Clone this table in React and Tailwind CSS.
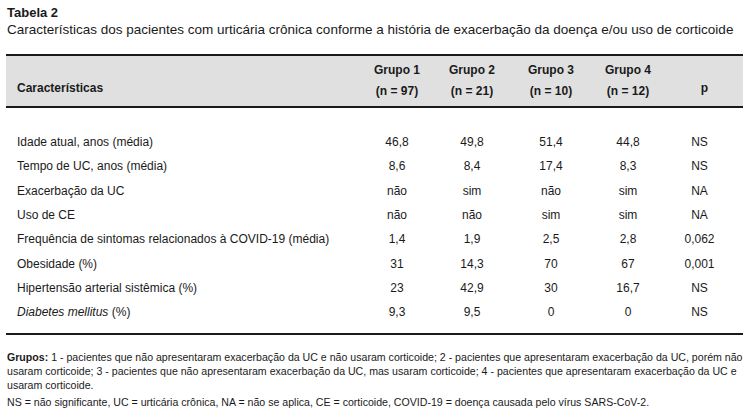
import React from 'react';

const rows = [
  { label: 'Idade atual, anos (média)', values: ['46,8', '49,8', '51,4', '44,8', 'NS'] },
  { label: 'Tempo de UC, anos (média)', values: ['8,6', '8,4', '17,4', '8,3', 'NS'] },
  { label: 'Exacerbação da UC', values: ['não', 'sim', 'não', 'sim', 'NA'] },
  { label: 'Uso de CE', values: ['não', 'não', 'sim', 'sim', 'NA'] },
  { label: 'Frequência de sintomas relacionados à COVID-19 (média)', values: ['1,4', '1,9', '2,5', '2,8', '0,062'] },
  { label: 'Obesidade (%)', values: ['31', '14,3', '70', '67', '0,001'] },
  { label: 'Hipertensão arterial sistêmica (%)', values: ['23', '42,9', '30', '16,7', 'NS'] },
  { label: <><i>Diabetes mellitus</i> (%)</>, values: ['9,3', '9,5', '0', '0', 'NS'] },
];

const groups = [
  { name: 'Grupo 1', n: '(n = 97)' },
  { name: 'Grupo 2', n: '(n = 21)' },
  { name: 'Grupo 3', n: '(n = 10)' },
  { name: 'Grupo 4', n: '(n = 12)' },
];

// widths of the group columns and the p column
const colW = ['w-[70px]', 'w-[80px]', 'w-[78px]', 'w-[76px]', 'w-[77px]'];

export default function App() {
  return (
    <div className="w-[749px] h-[414px] bg-white text-[#1a1a1a] font-['Liberation_Sans',Arial,sans-serif] overflow-hidden">
      {/* Caption */}
      <div className="pl-[7px] pt-[5px]">
        <p className="text-[13px] font-bold leading-[15px]">Tabela 2</p>
        <p className="text-[13.5px] leading-[16px] mt-[2px]">
          Características dos pacientes com urticária crônica conforme a história de exacerbação da doença e/ou uso de corticoide
        </p>
      </div>

      {/* Table */}
      <div className="ml-[6px] w-[737px] mt-[16px]">
        <div className="border-t-2 border-b-2 border-[#1a1a1a] bg-[#e0e0e0] h-[54px] flex text-[12px] font-bold">
          <div className="flex-1 flex items-end pl-[11px] pb-[9px]">Características</div>
          {groups.map((g, i) => (
            <div key={g.name} className={`${colW[i]} flex flex-col items-center justify-center leading-[21px]`}>
              <span>{g.name}</span>
              <span>{g.n}</span>
            </div>
          ))}
          <div className={`${colW[4]} flex items-end justify-center pb-[9px]`}>p</div>
        </div>

        <div className="pt-[22px] pb-[9px] border-b-2 border-[#1a1a1a] text-[12px]">
          {rows.map((r, idx) => (
            <div key={idx} className="h-[24.3px] flex items-center">
              <div className="flex-1 pl-[11px]">{r.label}</div>
              {r.values.map((v, i) => (
                <div key={i} className={`${colW[i]} text-center ${i === 4 ? 'pr-[10px]' : ''}`}>{v}</div>
              ))}
            </div>
          ))}
        </div>
      </div>

      {/* Footnotes */}
      <div className="pl-[7px] pr-[6px] pt-[15px] text-[10.6px] leading-[14px]">
        <p>
          <b>Grupos:</b> 1 - pacientes que não apresentaram exacerbação da UC e não usaram corticoide; 2 - pacientes que apresentaram exacerbação da UC, porém não usaram corticoide; 3 - pacientes que não apresentaram exacerbação da UC, mas usaram corticoide; 4 - pacientes que apresentaram exacerbação da UC e usaram corticoide.
        </p>
        <p className="mt-[3px]">
          NS = não significante, UC = urticária crônica, NA = não se aplica, CE = corticoide, COVID-19 = doença causada pelo vírus SARS-CoV-2.
        </p>
      </div>
    </div>
  );
}
